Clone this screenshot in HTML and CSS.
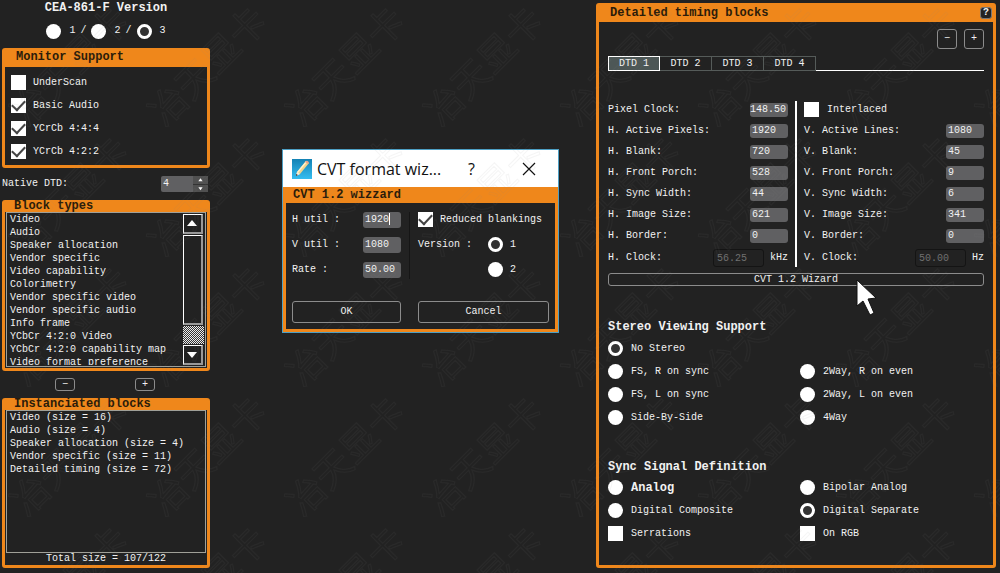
FILE: index.html
```html
<!DOCTYPE html>
<html lang="en">
<head>
<meta charset="utf-8">
<title>EDID editor</title>
<link rel="stylesheet" href="styles.css">
</head>
<body>
<main class="workspace">
  <section class="side">
    <h2 class="title center">CEA-861-F Version</h2>
    <div class="versions">
      <label class="opt"><input class="radio" type="radio" name="cea">1</label><span>/</span>
      <label class="opt"><input class="radio" type="radio" name="cea">2</label><span>/</span>
      <label class="opt"><input class="radio" type="radio" name="cea" checked>3</label>
    </div>

    <section class="panel support">
      <h2 class="bar tall">Monitor Support</h2>
      <div class="checks">
        <label class="opt"><input class="check" type="checkbox">UnderScan</label>
        <label class="opt"><input class="check" type="checkbox" checked>Basic Audio</label>
        <label class="opt"><input class="check" type="checkbox" checked>YCrCb 4:4:4</label>
        <label class="opt"><input class="check" type="checkbox" checked>YCrCb 4:2:2</label>
      </div>
    </section>

    <div class="native">
      <label for="native">Native DTD:</label>
      <div class="spinner">
        <input id="native" type="text" value="4">
        <div class="steps">
          <button type="button" aria-label="Increase"><svg viewBox="0 0 14 7"><path d="M5 5L7 2L9 5Z"/></svg></button>
          <button type="button" aria-label="Decrease"><svg viewBox="0 0 14 7"><path d="M5 2L7 5L9 2Z"/></svg></button>
        </div>
      </div>
    </div>

    <section class="panel">
      <h2 class="bar">Block types</h2>
      <div class="listbox">
        <select class="list" size="12" aria-label="Block types">
          <option>Video</option><option>Audio</option><option>Speaker allocation</option><option>Vendor specific</option><option>Video capability</option><option>Colorimetry</option><option>Vendor specific video</option><option>Vendor specific audio</option><option>Info frame</option><option>YCbCr 4:2:0 Video</option><option>YCbCr 4:2:0 capability map</option><option>Video format preference</option>
        </select>
        <div class="scroll">
          <button type="button" aria-label="Scroll up"><svg viewBox="0 0 17 17"><path d="M3 11L8 5L13 11Z"/></svg></button>
          <div class="thumb"></div>
          <div class="trough"></div>
          <button type="button" aria-label="Scroll down"><svg viewBox="0 0 17 17"><path d="M3 6L8 12L13 6Z"/></svg></button>
        </div>
      </div>
    </section>

    <div class="pair">
      <button class="btn small" type="button">−</button>
      <button class="btn small" type="button">+</button>
    </div>

    <section class="panel">
      <h2 class="bar">Instanciated blocks</h2>
      <div class="listbox short">
        <select class="list" size="10" aria-label="Instanciated blocks">
          <option>Video (size = 16)</option><option>Audio (size = 4)</option><option>Speaker allocation (size = 4)</option><option>Vendor specific (size = 11)</option><option>Detailed timing (size = 72)</option>
        </select>
      </div>
      <p class="total">Total size = 107/122</p>
    </section>
  </section>

  <section class="panel detail">
    <header class="bar tall detail-bar"><h2 class="title">Detailed timing blocks</h2><button class="help" type="button">?</button></header>
    <div class="detail-body">
      <div class="tools">
        <button class="btn square" type="button">−</button>
        <button class="btn square" type="button">+</button>
      </div>
      <div class="tabs" role="tablist">
        <button class="tab active" role="tab" aria-selected="true" type="button">DTD 1</button>
        <button class="tab" role="tab" type="button">DTD 2</button>
        <button class="tab" role="tab" type="button">DTD 3</button>
        <button class="tab" role="tab" type="button">DTD 4</button>
      </div>

      <div class="timing">
        <div class="col">
          <label class="row">Pixel Clock:<input class="field wide" value="148.50"></label>
          <label class="row">H. Active Pixels:<input class="field" value="1920"></label>
          <label class="row">H. Blank:<input class="field" value="720"></label>
          <label class="row">H. Front Porch:<input class="field" value="528"></label>
          <label class="row">H. Sync Width:<input class="field" value="44"></label>
          <label class="row">H. Image Size:<input class="field" value="621"></label>
          <label class="row">H. Border:<input class="field" value="0"></label>
          <div class="row clock"><label for="hclock">H. Clock:</label><span class="measure"><input id="hclock" class="field off" value="56.25" disabled>kHz</span></div>
        </div>
        <div class="col">
          <label class="row opt"><input class="check" type="checkbox">Interlaced</label>
          <label class="row">V. Active Lines:<input class="field" value="1080"></label>
          <label class="row">V. Blank:<input class="field" value="45"></label>
          <label class="row">V. Front Porch:<input class="field" value="9"></label>
          <label class="row">V. Sync Width:<input class="field" value="6"></label>
          <label class="row">V. Image Size:<input class="field" value="341"></label>
          <label class="row">V. Border:<input class="field" value="0"></label>
          <div class="row clock"><label for="vclock">V. Clock:</label><span class="measure"><input id="vclock" class="field off" value="50.00" disabled>Hz</span></div>
        </div>
      </div>
      <button class="btn wizard" type="button">CVT 1.2 Wizard</button>

      <h3 class="title stereo-title">Stereo Viewing Support</h3>
      <div class="choices">
        <label class="opt full"><input class="radio" type="radio" name="stereo" checked>No Stereo</label>
        <label class="opt"><input class="radio" type="radio" name="stereo">FS, R on sync</label>
        <label class="opt"><input class="radio" type="radio" name="stereo">2Way, R on even</label>
        <label class="opt"><input class="radio" type="radio" name="stereo">FS, L on sync</label>
        <label class="opt"><input class="radio" type="radio" name="stereo">2Way, L on even</label>
        <label class="opt"><input class="radio" type="radio" name="stereo">Side-By-Side</label>
        <label class="opt"><input class="radio" type="radio" name="stereo">4Way</label>
      </div>

      <h3 class="title sync-title">Sync Signal Definition</h3>
      <div class="choices">
        <label class="opt strong"><input class="radio" type="radio" name="sync">Analog</label>
        <label class="opt"><input class="radio" type="radio" name="sync">Bipolar Analog</label>
        <label class="opt"><input class="radio" type="radio" name="sync">Digital Composite</label>
        <label class="opt"><input class="radio" type="radio" name="sync" checked>Digital Separate</label>
        <label class="opt"><input class="check" type="checkbox">Serrations</label>
        <label class="opt"><input class="check" type="checkbox">On RGB</label>
      </div>
    </div>
  </section>
</main>

<section class="dialog" role="dialog" aria-label="CVT format wizard">
  <header class="caption">
    <svg class="app-icon" viewBox="0 0 20 20">
      <defs><linearGradient id="sky" x1="0" y1="0" x2="0" y2="1"><stop offset="0" stop-color="#1482b4"/><stop offset="1" stop-color="#35bdf0"/></linearGradient></defs>
      <rect width="20" height="20" fill="url(#sky)"/>
      <path d="M4 17L5 13L14 2L17 4L8 15Z" fill="#f2d48c"/>
      <path d="M5 13L14 2L15 3L6 14Z" fill="#fff3cf"/>
      <path d="M13 3L14 2Q16 1 17 4L16 5Z" fill="#e9a58c"/>
      <path d="M4 17L5 13L8 15Z" fill="#f4efe4"/>
      <path d="M4 17L4 15L6 16Z" fill="#333"/>
    </svg>
    <h2 class="caption-text">CVT format wiz...</h2>
    <button class="cap-btn" type="button">?</button>
    <button class="cap-btn" type="button" aria-label="Close"><svg viewBox="0 0 14 14"><path d="M1 1L13 13M13 1L1 13"/></svg></button>
  </header>
  <div class="dialog-frame">
    <h3 class="bar dialog-bar">CVT 1.2 wizzard</h3>
    <div class="dialog-body">
      <div class="inputs">
        <label class="line">H util :<input class="field big" value="1920"></label>
        <label class="line">V util :<input class="field big" value="1080"></label>
        <label class="line">Rate :<input class="field big" value="50.00"></label>
      </div>
      <div class="settings">
        <label class="line opt"><input class="check" type="checkbox" checked>Reduced blankings</label>
        <div class="cvt-version">
          <span class="line">Version :</span>
          <div>
            <label class="line opt"><input class="radio" type="radio" name="cvt" checked>1</label>
            <label class="line opt"><input class="radio" type="radio" name="cvt">2</label>
          </div>
        </div>
      </div>
      <button class="btn large" type="button">OK</button>
      <button class="btn large" type="button">Cancel</button>
    </div>
    <span class="caret"></span>
  </div>
</section>

<svg class="cursor" viewBox="0 0 22 38" aria-hidden="true"><path d="M1 1V27L7 22L14 36L18 34L12 20L20 19Z"/></svg>

<svg class="watermark" aria-hidden="true">
  <defs><pattern id="mark" width="138" height="130" patternUnits="userSpaceOnUse"><text class="mark-text" x="68" y="64" text-anchor="middle" dominant-baseline="central" transform="rotate(-45 68 64)">冶天显卡</text></pattern></defs>
  <rect width="100%" height="100%" fill="url(#mark)"/>
</svg>
</body>
</html>
```
FILE: styles.css
```css
:root {
  --bg: #222;
  --orange: #ef871b;
  --text: #f2f2f2;
  --field: #606062;
  --line: #8c8c8c;
}

* { box-sizing: border-box; }

body {
  margin: 0;
  background: var(--bg);
  color: var(--text);
  font: 10px/14px "Liberation Mono", monospace;
  min-height: 100vh;
}

h2, h3, p { margin: 0; font-size: inherit; }
button, input, select { font: inherit; color: inherit; margin: 0; }

.workspace {
  display: grid;
  grid-template-columns: 208px 400px;
  justify-content: space-between;
  align-items: start;
  padding: 1px 4px 0 2px;
}

.title { font-size: 12px; font-weight: bold; line-height: 14px; }
.center { text-align: center; }

.versions { display: flex; justify-content: center; align-items: center; gap: 5px; height: 16px; margin: 8px 0 9px; }
.opt { display: flex; align-items: center; gap: 8px; }

.radio, .check {
  appearance: none;
  flex: none;
  width: 15px;
  height: 15px;
  background: #fff;
}
.check { display: grid; place-items: center; }
.radio { border-radius: 50%; }
.radio:checked { background: #333; border: 3px solid #fff; }
.check:checked::before {
  content: "";
  width: 11px;
  height: 6px;
  border: solid #444;
  border-width: 0 0 2px 2px;
  transform: translateY(-2px) rotate(-47deg);
}

.panel { border: 3px solid var(--orange); border-radius: 3px; }
.bar {
  background: var(--orange);
  color: #2b1c0a;
  font-size: 12px;
  font-weight: bold;
  line-height: 12px;
  padding-left: 9px;
}
.panel > .bar { margin-top: -3px; border-radius: 3px 3px 0 0; }
.bar.tall { line-height: 19px; padding-left: 11px; }

.checks { padding: 4px 6px 2px; }
.checks .opt { height: 23px; gap: 7px; }

.native { display: flex; justify-content: space-between; align-items: center; margin: 8px 2px 8px 0; }
.spinner { display: flex; width: 47px; height: 16px; background: var(--field); border-radius: 2px; }
.spinner input { flex: 1; min-width: 0; border: 0; background: none; padding: 0 2px; }
.steps { display: grid; width: 15px; gap: 1px; background: #333; }
.steps button { padding: 0; border: 0; background: #505050; display: grid; }
.steps svg { width: 100%; fill: #fff; }

.listbox { display: flex; height: 155px; border: 1px solid #a0a098; margin: 0 1px 1px; padding: 1px; }
.listbox.short { height: 143px; margin-bottom: 0; }
.list {
  flex: 1;
  min-width: 0;
  height: 100%;
  border: 0;
  padding: 0;
  background: none;
  outline: 0;
  overflow: hidden;
  scrollbar-width: none;
}
.list option { height: 13px; min-height: 13px; line-height: 13px; padding: 0 2px; }

.scroll { display: flex; flex-direction: column; gap: 1px; width: 21px; }
.scroll button, .thumb { border: 1px solid #fff; border-right: 2px solid #999; border-bottom: 2px solid #999; background: var(--bg); padding: 0; margin-right: 1px; }
.scroll button { height: 20px; }
.scroll svg { display: block; width: 17px; fill: #fff; }
.thumb { flex: 1; }
.trough { height: 18px; background: repeating-conic-gradient(#eee 0 25%, #333 0 50%) 0 0 / 2px 2px; }

.btn { border: 1px solid var(--line); border-radius: 3px; background: none; padding: 0; display: grid; place-items: center; }
.pair { display: flex; justify-content: center; gap: 60px; margin: 7px 2px 7px 0; }
.small { width: 20px; height: 13px; line-height: 10px; }
.square { width: 20px; height: 20px; }
.total { line-height: 12px; text-align: center; }

.detail { margin-top: 2px; }
.detail-bar { display: flex; justify-content: space-between; align-items: center; height: 19px; padding-right: 1px; }
.help { display: grid; place-items: center; width: 12px; height: 12px; border: 1px solid #777; border-radius: 3px; background: var(--bg); color: var(--text); padding: 0; font-size: 10px; line-height: 10px; }
.detail-body { padding: 7px 9px 20px; }
.tools { display: flex; justify-content: flex-end; gap: 7px; }
.tabs { display: flex; margin-top: 7px; }
.tabs::after { content: ""; flex: 1; border-bottom: 1px solid #fff; }
.tab { width: 52px; height: 15px; padding: 0; border: 1px solid #555b59; border-left-width: 0; background: none; line-height: 13px; }
.tab.active { background: #4d5756; border: 1px solid #fff; }

.timing { display: grid; grid-template-columns: 180px 1fr; gap: 16px; margin-top: 28px; position: relative; }
.timing::after { content: ""; position: absolute; left: 187px; top: 2px; bottom: 3px; width: 2px; background: #fff; }
.row { display: flex; justify-content: space-between; align-items: center; height: 21px; }
.row.opt { justify-content: flex-start; }
.row.clock { height: 24px; }
.field { width: 38px; height: 14px; border: 0; border-radius: 3px; background: var(--field); padding: 0 0 0 2px; }
.field.wide { padding-left: 0; }
.field.big { height: 16px; }
.measure { display: flex; align-items: center; gap: 6px; }
.field.off { width: 51px; height: 18px; border: 1px solid #141414; background: none; color: #707070; padding-left: 3px; }
.wizard { width: 100%; height: 13px; line-height: 11px; margin-top: 3px; }

.stereo-title { margin: 34px 0 3px; }
.sync-title { margin: 31px 0 2px; }
.choices { display: grid; grid-template-columns: 192px 1fr; grid-auto-rows: 23px; }
.choices .full { grid-column: 1 / -1; }
.strong { font-size: 12px; font-weight: bold; }

.dialog { position: absolute; left: 282px; top: 149px; width: 277px; border: 1px solid #4d9fc4; background: var(--bg); }
.caption { display: flex; align-items: center; height: 37px; padding: 0 22px 0 9px; background: #fff; color: #111; font: 16px/20px "Open Sans", sans-serif; }
.app-icon { width: 20px; height: 20px; }
.caption-text { flex: 1; margin-left: 5px; font-weight: normal; white-space: nowrap; }
.cap-btn { border: 0; background: none; padding: 0; width: 15px; display: grid; place-items: center; }
.cap-btn + .cap-btn { margin-left: 42px; }
.cap-btn svg { width: 14px; height: 14px; fill: none; stroke: #111; stroke-width: 1.2; }
.dialog-frame { position: relative; border: 3px solid var(--orange); border-top: 0; }
.dialog-bar { line-height: 16px; padding-left: 7px; }
.dialog-body { display: grid; grid-template-columns: 109px 1fr; column-gap: 17px; row-gap: 19px; padding: 4px 6px 6px; }
.line { display: flex; justify-content: space-between; align-items: center; height: 25px; }
.line.opt { justify-content: flex-start; gap: 7px; }
.settings { position: relative; }
.settings::before { content: ""; position: absolute; left: -9px; top: 5px; bottom: 3px; width: 1px; background: #151515; }
.cvt-version { display: grid; grid-template-columns: 70px 1fr; }
.large { height: 22px; }
.caret { position: absolute; left: 103px; top: 26px; width: 1px; height: 12px; background: #fff; }

.cursor { position: absolute; left: 856px; top: 279px; width: 22px; height: 38px; fill: #fff; stroke: #111; stroke-width: 1; }
.watermark { position: absolute; inset: 0; width: 100%; height: 100%; pointer-events: none; }
.mark-text { font: 37px "Noto Sans CJK SC", sans-serif; fill: none; stroke: #808080; stroke-width: 1; stroke-opacity: 0.08; }
```
